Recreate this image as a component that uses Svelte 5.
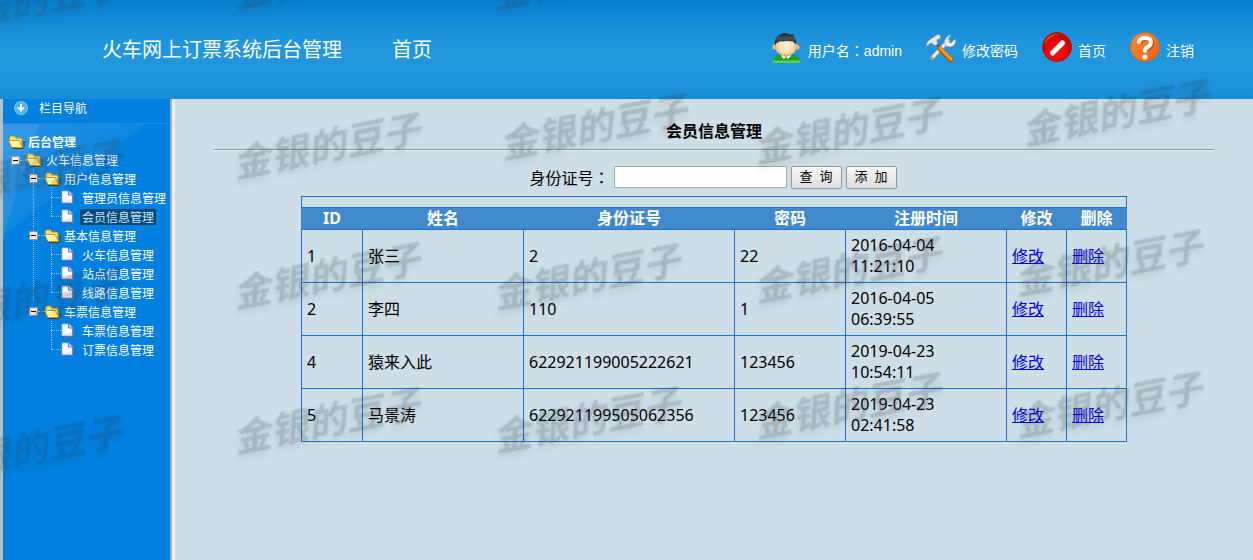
<script>
	let keyword = $state('');

	const columns = ['ID', '姓名', '身份证号', '密码', '注册时间', '修改', '删除'];

	const members = [
		{ id: 1, name: '张三', card: '2', password: '22', date: '2016-04-04', time: '11:21:10' },
		{ id: 2, name: '李四', card: '110', password: '1', date: '2016-04-05', time: '06:39:55' },
		{ id: 4, name: '猿来入此', card: '622921199005222621', password: '123456', date: '2019-04-23', time: '10:54:11' },
		{ id: 5, name: '马景涛', card: '622921199505062356', password: '123456', date: '2019-04-23', time: '02:41:58' }
	];

	const groups = [
		{ name: '用户信息管理', items: ['管理员信息管理', '会员信息管理'] },
		{ name: '基本信息管理', items: ['火车信息管理', '站点信息管理', '线路信息管理'] },
		{ name: '车票信息管理', items: ['车票信息管理', '订票信息管理'] }
	];
	let current = $state('会员信息管理');

	// centre points of the watermark stamps
	const marks = [
		[28, -1], [326, -26], [586, -26],
		[28, 171], [326, 144], [593, 125], [847, 129], [1115, 111],
		[28, 298], [326, 274], [586, 275], [847, 268], [1108, 261],
		[28, 447], [326, 419], [586, 418], [847, 404], [1108, 403]
	];
</script>

{#snippet folder()}
	<svg class="folder" width="17" height="14" viewBox="0 0 17 14" aria-hidden="true">
		<path d="M16 6v5.500l-1 2H4" fill="none" stroke="#4a4210" />
		<path d="M1.500 5V2.500l1-1.500h4l1.500 2h5l1 1v7.500l-1 1z" fill="#f6df75" stroke="#c09a22" />
		<path d="M.5 5.500h10.500l3.500 7H4z" fill="#fff59d" stroke="#c59c20" />
		<path d="M2 6.500h8.500" stroke="#fffde0" />
	</svg>
{/snippet}

{#snippet sheet()}
	<svg class="sheet" width="13" height="15" viewBox="0 0 13 15" aria-hidden="true">
		<path d="M1 1h7l3.500 3.500V13H1z" fill="#dfeaff" stroke="#8fa5de" />
		<path d="M1.500 1.500h5v4h4v3l-9 4z" fill="#fff" />
		<path d="M7.500 1v4h4" fill="#b9cbf4" stroke="#5f7bc8" />
		<path d="M1 13.500h11V5" fill="none" stroke="#75698f" />
	</svg>
{/snippet}

{#snippet minus()}
	<svg class="minus" width="9" height="9" viewBox="0 0 9 9" aria-hidden="true">
		<path d="M.5.5h8v8h-8z" fill="#eceae6" stroke="#9c9488" />
		<path d="M2 4.500h5" stroke="#000" />
	</svg>
{/snippet}

<div class="page">
	<header>
		<div class="brand">
			<h1>火车网上订票系统后台管理</h1>
			<a href="#home">首页</a>
		</div>
		<nav class="tools">
			<span class="tool">
				<svg width="30" height="32" viewBox="0 0 30 32" aria-hidden="true">
					<defs>
						<radialGradient id="face"><stop offset="0" stop-color="#fff0d7" /><stop offset=".6" stop-color="#fde0bb" /><stop offset="1" stop-color="#edb981" /></radialGradient>
						<linearGradient id="hair" x2="0" y2="1"><stop offset="0" stop-color="#182731" /><stop offset=".5" stop-color="#46545e" /><stop offset="1" stop-color="#10171c" /></linearGradient>
					</defs>
					<path d="M1 30v-2q1-4 6-5l3-1h8l4 1q5 1 6 5v2z" fill="#18a42b" />
					<path d="M1 28.500h27V31H1z" fill="#68cf45" />
					<path d="M10 22l4 3 4-3 1 2-3 3-2-2-2 2-3-3z" fill="#fff" />
					<circle cx="3" cy="15" r="2.500" fill="#f5c08a" />
					<circle cx="25" cy="15" r="2.500" fill="#f5c08a" />
					<ellipse cx="14" cy="14" rx="11" ry="10" fill="url(#face)" stroke="#c98f56" stroke-width=".5" />
					<path d="M3 13Q2 5 8 2.500q5-3 10 0 3 0 4-1-1 2 0 3 3 3 2 8l-3-3q-7-1-10 0-5-1-8 3.500z" fill="url(#hair)" />
				</svg>
				<span>用户名<span class="colon">：</span>admin</span>
			</span>
			<a class="tool" href="#password">
				<svg width="30" height="32" viewBox="0 0 30 32" aria-hidden="true">
					<path d="M6 26L22 9" stroke="#85909a" stroke-width="5" stroke-linecap="round" />
					<path d="M6 26L22 9" stroke="#eceff2" stroke-width="3" stroke-linecap="round" />
					<path d="M25 3l-3 4 0 3 3 1 4-4q2 4-2 7-3 2-7 0-2-3-1-6 2-5 6-5z" fill="#f4f5f6" stroke="#8d979e" stroke-width=".6" />
					<path d="M10 11l5 6" stroke="#555f68" stroke-width="3" />
					<path d="M14 17l11 11" stroke="#b85a05" stroke-width="5" stroke-linecap="round" />
					<path d="M14 16l11 11" stroke="#f99a22" stroke-width="3" stroke-linecap="round" />
					<path d="M1 14l-1 4q-1-7 3-10l6-4 3-2 3 2-1 3-3 1 1 4-3 2-4-3z" fill="#e4e7e9" stroke="#6f7b84" stroke-width=".8" />
					<circle cx="6" cy="26" r="1.500" fill="#8e979f" />
				</svg>
				修改密码
			</a>
			<a class="tool" href="#home">
				<svg width="30" height="32" viewBox="0 0 30 32" aria-hidden="true">
					<defs><radialGradient id="red" cy=".65"><stop offset="0" stop-color="#ff1515" /><stop offset=".65" stop-color="#ef0505" /><stop offset="1" stop-color="#c90000" /></radialGradient></defs>
					<circle cx="15" cy="15" r="14.500" fill="url(#red)" stroke="#a51c18" />
					<path d="M2 13Q5 1 17 2 7 4 2 13" fill="#f64d00" />
					<path d="M10.500 21l10-10" stroke="#fff" stroke-width="5" stroke-linecap="round" />
				</svg>
				首页
			</a>
			<a class="tool" href="#logout">
				<svg width="30" height="32" viewBox="0 0 30 32" aria-hidden="true">
					<defs><linearGradient id="orange" x2="1" y2="1"><stop offset="0" stop-color="#fc8d40" /><stop offset=".5" stop-color="#f9761f" /><stop offset="1" stop-color="#ee6008" /></linearGradient></defs>
					<circle cx="15" cy="15" r="14.500" fill="url(#orange)" stroke="#d06b32" />
					<path d="M10 11q1-4 6-4 6 0 6 4 0 3-3 5-4 1-3 4" fill="none" stroke="#b94b0c" stroke-width="4" />
					<path d="M9 10q1-4 6-4 6 0 6 4 0 3-3 5-3 1-3 4" fill="none" stroke="#fff" stroke-width="4" stroke-linecap="round" />
					<circle cx="15" cy="25" r="3" fill="#f1f1ed" stroke="#bd5a23" stroke-width=".5" />
				</svg>
				注销
			</a>
		</nav>
	</header>

	<div class="body">
		<aside>
			<div class="nav-title">
				<svg width="14" height="14" viewBox="0 0 14 14" aria-hidden="true">
					<circle cx="7" cy="7" r="6.500" fill="#4eb4e9" stroke="#83caed" />
					<path d="M6 3h2v3.500h3L7 11 3 6.500h3z" fill="#fff" />
				</svg>
				栏目导航
			</div>
			<div class="tree">
				<div class="row root">{@render folder()}<strong>后台管理</strong></div>
				<div class="row top">{@render minus()}<i class="dots"></i>{@render folder()}<span>火车信息管理</span></div>
				<ul class="groups">
					{#each groups as group}
						<li>
							<div class="row">{@render minus()}<i class="dots"></i>{@render folder()}<span>{group.name}</span></div>
							<ul class="items">
								{#each group.items as item}
									<li class="row">
										<i class="dots long"></i>{@render sheet()}
										<a href="#{item}" class:active={item === current} onclick={() => (current = item)}>{item}</a>
									</li>
								{/each}
							</ul>
						</li>
					{/each}
				</ul>
			</div>
		</aside>

		<main>
			<h2>会员信息管理</h2>
			<hr />
			<form onsubmit={(e) => e.preventDefault()}>
				<label for="card">身份证号<span class="colon">：</span></label>
				<input id="card" type="text" bind:value={keyword} />
				<button type="submit">查&nbsp; 询</button>
				<button type="button">添&nbsp; 加</button>
			</form>

			<table>
				<colgroup>
					<col class="c-id" /><col class="c-name" /><col class="c-card" /><col class="c-pass" />
					<col class="c-name" /><col class="c-link" /><col class="c-link" />
				</colgroup>
				<thead>
					<tr class="blank"><td colspan="7"></td></tr>
					<tr>
						{#each columns as column}
							<th>{column}</th>
						{/each}
					</tr>
				</thead>
				<tbody>
					{#each members as member}
						<tr>
							<td>{member.id}</td>
							<td>{member.name}</td>
							<td>{member.card}</td>
							<td>{member.password}</td>
							<td>{member.date}<br />{member.time}</td>
							<td><a href="#edit">修改</a></td>
							<td><a href="#delete">删除</a></td>
						</tr>
					{/each}
				</tbody>
			</table>
		</main>
	</div>

	<div class="marks" aria-hidden="true">
		{#each marks as [x, y]}
			<span style="left: {x}px; top: {y}px">金银的豆子</span>
		{/each}
	</div>
</div>

<style>
	:global(body) {
		margin: 0;
	}

	.page {
		position: relative;
		display: flex;
		flex-direction: column;
		min-height: 100vh;
		overflow: hidden;
		font-family: "Noto Sans", "Noto Sans CJK SC", sans-serif;
		font-size: 16px;
		color: #000;
	}

	header {
		display: flex;
		justify-content: space-between;
		align-items: center;
		height: 99px;
		padding: 0 59px 2px 102px;
		box-sizing: border-box;
		background: linear-gradient(#0680cf, #2196dd 45%, #2296dd 72%, #188cd5);
		color: #fff;
	}

	header a {
		color: #fff;
		text-decoration: none;
	}

	.brand {
		display: flex;
		gap: 50px;
		font-size: 20px;
		line-height: 28px;
		font-family: "Noto Sans CJK SC", sans-serif;
	}

	h1 {
		margin: 0;
		font-size: 20px;
		font-weight: normal;
	}

	.tools {
		display: flex;
		gap: 24px;
		padding-bottom: 2px;
		font-family: "Liberation Sans", "Noto Sans CJK SC", sans-serif;
		font-size: 14px;
	}

	.tool {
		display: flex;
		align-items: center;
		gap: 6px;
		line-height: 20px;
		padding-top: 6px;
		white-space: nowrap;
	}

	.tool svg {
		margin-top: -6px;
	}

	/* the traditional face centres the full-width colon */
	.colon {
		font-family: "Noto Sans CJK TC", sans-serif;
	}

	.body {
		display: flex;
		flex: 1;
	}

	aside {
		flex: none;
		width: 167px;
		border-left: 3px solid #b9c1c8;
		border-right: 2px solid #aaa9ad;
		background: #0080df;
		color: #fff;
		font-family: "Noto Sans CJK SC", sans-serif;
		font-size: 12px;
	}

	.nav-title {
		display: flex;
		align-items: center;
		gap: 11px;
		height: 17px;
		padding: 0 0 7px 11px;
		border-bottom: 1px solid #1a8be2;
	}

	.tree {
		padding-top: 9px;
		background:
			linear-gradient(to bottom right, rgba(255, 255, 255, 0.08) 50%, transparent 50%) no-repeat 0 0 / 36px 112px,
			linear-gradient(to bottom right, rgba(255, 255, 255, 0.14), rgba(255, 255, 255, 0.06) 50%, transparent 50%) no-repeat 0 0 / 142px 112px;
	}

	ul {
		list-style: none;
		margin: 0;
		padding: 0;
	}

	.row {
		display: flex;
		align-items: center;
		height: 19px;
		line-height: 16px;
		white-space: nowrap;
	}

	.root {
		height: 18px;
		padding-left: 5px;
	}

	.top {
		height: 18px;
		padding-left: 8px;
	}

	.row svg {
		flex: none;
	}

	.folder {
		margin-right: 3px;
	}

	.sheet {
		margin-right: 6px;
	}

	.groups {
		padding-left: 26px;
	}

	.groups > li:not(:last-child) {
		background: linear-gradient(#8cc6ef 50%, transparent 50%) repeat-y 4px 0 / 1px 2px;
	}

	.items {
		margin-left: 22px;
	}

	.items .row {
		background: linear-gradient(#8cc6ef 50%, transparent 50%) repeat-y 0 0 / 1px 2px;
	}

	.items .row:last-child {
		background: repeating-linear-gradient(#8cc6ef 0 1px, transparent 1px 2px) no-repeat 0 0 / 1px 10px;
	}

	.dots {
		width: 6px;
		border-top: 1px dotted #8cc6ef;
	}

	.long {
		width: 10px;
	}

	.row a {
		padding: 0 2px;
		color: #fff;
		text-decoration: none;
	}

	.row a.active {
		background: #0b4a78;
		color: #c7e6fb;
	}

	main {
		flex: 1;
		min-width: 0;
		padding-top: 20px;
		border-left: 3px solid #ececee;
		background: #cedee6;
	}

	h2 {
		margin: 0;
		text-align: center;
		font-size: 16px;
		line-height: 24px;
	}

	hr {
		margin: 6px 39px 14px;
		border: 0;
		border-top: 1px solid #949494;
		border-bottom: 1px solid #eee;
	}

	form {
		display: flex;
		justify-content: center;
		align-items: center;
		gap: 4px;
		height: 24px;
		padding-right: 2px;
	}

	input {
		width: 173px;
		height: 22px;
		box-sizing: border-box;
		border: 1px solid #a9a9a9;
		background: #fff;
	}

	button {
		width: 51px;
		height: 23px;
		padding: 0;
		border: 1px solid #999;
		border-radius: 2px;
		background: linear-gradient(#f8f8f8, #ddd);
		font-family: "Liberation Sans", "Noto Sans CJK SC", sans-serif;
		font-size: 13px;
		line-height: 20px;
		color: #000;
	}

	table {
		width: calc(100% - 252px);
		margin: 7px auto 0;
		border-collapse: collapse;
		table-layout: fixed;
	}

	.c-id {
		width: 61px;
	}

	.c-name {
		width: 161px;
	}

	.c-card {
		width: 211px;
	}

	.c-pass {
		width: 111px;
	}

	.c-link {
		width: 60px;
	}

	td {
		height: 52px;
		padding: 0 5px;
		border: 1px solid #1e74c8;
		line-height: 21px;
	}

	.blank td {
		height: 10px;
		padding: 0;
	}

	th {
		height: 21px;
		padding: 0;
		background: #4089cd;
		border-bottom: 1px solid #1e74c8;
		color: #fff;
		line-height: 21px;
	}

	td a {
		color: #0000ee;
	}

	.marks {
		position: absolute;
		inset: 0;
		overflow: hidden;
		pointer-events: none;
	}

	.marks span {
		position: absolute;
		transform: translate(-50%, -50%) rotate(-11deg);
		font-family: "Noto Sans CJK SC", sans-serif;
		font-size: 38px;
		font-style: italic;
		font-weight: bold;
		line-height: 40px;
		white-space: nowrap;
		color: rgba(50, 60, 70, 0.08);
		text-shadow: 0 0 2px rgba(50, 60, 70, 0.12), -2px 4px 6px rgba(50, 60, 70, 0.1);
	}
</style>
